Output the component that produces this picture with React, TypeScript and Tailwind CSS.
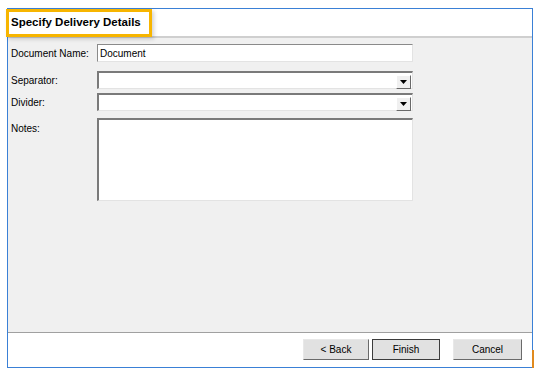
import React from "react";

const font = { fontFamily: '"Liberation Sans", Arial, sans-serif' };

function DropButton() {
  return (
    <div className="absolute right-[1px] top-[2px] w-[15px] h-[14px] bg-[#f0f0f0] border-t border-l border-t-white border-l-white border-b border-r border-b-[#696969] border-r-[#696969] flex items-center justify-center">
      <svg width="7" height="4" viewBox="0 0 7 4">
        <polygon points="0,0 7,0 3.5,4" fill="#000" />
      </svg>
    </div>
  );
}

function Select() {
  return (
    <div className="relative w-[316px] h-[18px] bg-white border-t-2 border-l-2 border-t-[#7a7a7a] border-l-[#7a7a7a] border-b border-r border-b-[#e3e3e3] border-r-[#e3e3e3]">
      <DropButton />
    </div>
  );
}

export default function App() {
  return (
    <div className="relative w-[537px] h-[372px] bg-white overflow-hidden text-black" style={font}>
      <div className="ml-[7px] mt-[8px] w-[526px] h-[360px] border border-[#3a80d6] flex flex-col">
        <div className="h-[29px] bg-white flex items-center pl-[3px] border-b-2 border-b-[#cfcfcf] shrink-0">
          <span className="text-[11.5px] font-bold leading-none">Specify Delivery Details</span>
        </div>
        <div className="flex-1 bg-[#f0f0f0] pt-[6px] border-b border-b-[#a0a0a0] text-[10px]">
          <div className="flex items-center h-[18px]">
            <div className="w-[89px] pl-[3px]">Document Name:</div>
            <div className="w-[316px] h-[18px] bg-white border-t border-l border-t-[#8a8a8a] border-l-[#8a8a8a] border-b border-r border-b-[#e3e3e3] border-r-[#e3e3e3] flex items-center pl-[2px]">
              Document
            </div>
          </div>
          <div className="flex items-center h-[18px] mt-[9px]">
            <div className="w-[89px] pl-[3px]">Separator:</div>
            <Select />
          </div>
          <div className="flex items-center h-[18px] mt-[4px]">
            <div className="w-[89px] pl-[3px]">Divider:</div>
            <Select />
          </div>
          <div className="flex items-start mt-[7px]">
            <div className="w-[89px] pl-[3px] pt-[3px]">Notes:</div>
            <div className="w-[316px] h-[83px] bg-white border-t-2 border-l-2 border-t-[#7a7a7a] border-l-[#7a7a7a] border-b border-r border-b-[#e3e3e3] border-r-[#e3e3e3]" />
          </div>
        </div>
        <div className="h-[34px] bg-white shrink-0 flex items-start justify-end pt-[6px] pr-[10px] text-[10px]">
          <div className="w-[66px] h-[21px] bg-[#e1e1e1] border border-t-[#e8e8e8] border-l-[#e8e8e8] border-b-[#6a6a6a] border-r-[#6a6a6a] flex items-center justify-center">
            &lt; Back
          </div>
          <div className="ml-[3px] w-[68px] h-[21px] bg-[#e1e1e1] border border-[#3c3c3c] flex items-center justify-center">
            Finish
          </div>
          <div className="ml-[13px] w-[69px] h-[21px] bg-[#e1e1e1] border border-t-[#e8e8e8] border-l-[#e8e8e8] border-b-[#6a6a6a] border-r-[#6a6a6a] flex items-center justify-center">
            Cancel
          </div>
        </div>
      </div>
      <div className="absolute left-[6px] top-[9px] w-[146px] h-[28px] border-[3px] border-[#f7b500] shadow-[2px_2px_4px_rgba(0,0,0,0.18)] pointer-events-none" />
      <div className="absolute left-[532px] top-[350px] w-[2px] h-[18px] bg-[#e08a1e]" />
    </div>
  );
}
